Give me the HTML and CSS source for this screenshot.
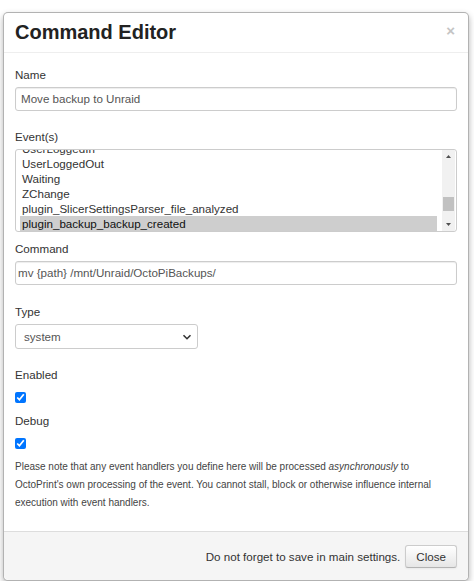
FILE: index.html
```html
<!DOCTYPE html>
<html lang="en">
<head>
    <meta charset="UTF-8">
    <meta content="width=device-width, initial-scale=1.0" name="viewport">
    <title>Command Editor</title>
    <link rel="stylesheet" href="styles.css">
</head>
<body>
    <div class="modal">
        <div class="modal-header">
            <h3>Command Editor</h3>
            <span class="close">&times;</span>
        </div>
        <div class="modal-body">
            <div class="label">Name</div>
            <div class="field field-name">Move backup to Unraid</div>

            <div class="label">Event(s)</div>
            <div class="listbox">
                <div class="options">
                    <div class="option">UserLoggedIn</div>
                    <div class="option">UserLoggedOut</div>
                    <div class="option">Waiting</div>
                    <div class="option">ZChange</div>
                    <div class="option">plugin_SlicerSettingsParser_file_analyzed</div>
                    <div class="option selected">plugin_backup_backup_created</div>
                </div>
                <div class="scrollbar">
                    <svg class="arrow" width="13" height="13" viewBox="0 0 13 13"><path d="M4 8 L9 8 L6.5 5 Z" fill="#505050"/></svg>
                    <div class="track-top"></div>
                    <div class="thumb"></div>
                    <div class="track-bottom"></div>
                    <svg class="arrow" width="13" height="13" viewBox="0 0 13 13"><path d="M4 5 L9 5 L6.5 8 Z" fill="#505050"/></svg>
                </div>
            </div>

            <div class="label">Command</div>
            <div class="field field-command">mv {path} /mnt/Unraid/OctoPiBackups/</div>

            <div class="label">Type</div>
            <div class="select">
                <span>system</span>
                <svg width="10" height="10" viewBox="0 0 10 10"><path d="M1.5 3.2 L5 6.7 L8.5 3.2" fill="none" stroke="#333" stroke-width="1.6"/></svg>
            </div>

            <div class="label label-check">Enabled</div>
            <input class="check" type="checkbox" checked>

            <div class="label label-check">Debug</div>
            <input class="check" type="checkbox" checked>

            <p class="note">Please note that any event handlers you define here will be processed <em>asynchronously</em> to OctoPrint's own processing of the event. You cannot stall, block or otherwise influence internal execution with event handlers.</p>
        </div>
        <div class="modal-footer">
            <span>Do not forget to save in main settings.</span>
            <button class="button">Close</button>
        </div>
    </div>
</body>
</html>
```

FILE: styles.css
```css
body {
    font-family: "Liberation Sans", Arial, Helvetica, sans-serif;
    background-color: #fff;
    margin: 0;
    padding: 12px 0 0 3px;
    color: #333;
}
.modal {
    width: 466px;
    box-sizing: border-box;
    background-color: #fff;
    border: 1px solid rgba(0, 0, 0, 0.3);
    border-radius: 5px;
    box-shadow: 0 3px 6px rgba(0, 0, 0, 0.3);
}
.modal-header {
    height: 39px;
    display: flex;
    align-items: center;
    justify-content: space-between;
    padding: 0 11px;
    border-bottom: 1px solid #eee;
}
.modal-header h3 {
    margin: 0;
    font-size: 20px;
    font-weight: bold;
    color: #222;
}
.close {
    font-size: 15px;
    font-weight: bold;
    color: #c4c4c4;
    margin-top: -4px;
    margin-right: 2px;
}
.modal-body {
    padding: 13px 11px 19px;
}
.label {
    font-size: 11.6px;
    line-height: 17px;
    margin-bottom: 4px;
}
.field {
    height: 24px;
    box-sizing: border-box;
    border: 1px solid #ccc;
    border-radius: 3px;
    box-shadow: inset 0 1px 1px rgba(0, 0, 0, 0.075);
    padding: 0 5px;
    font-size: 11.6px;
    line-height: 22px;
    color: #555;
    margin-bottom: 17px;
}
.field-command {
    padding-left: 2px;
    margin-bottom: 18px;
}
.listbox {
    display: flex;
    height: 83px;
    box-sizing: border-box;
    border: 1px solid #ccc;
    border-radius: 3px;
    overflow: hidden;
    margin-bottom: 8px;
}
.options {
    flex: 1;
    padding: 0 5px 0 4px;
    margin-top: -9px;
}
.option {
    font-size: 11.6px;
    line-height: 15px;
    height: 15px;
    padding-left: 2px;
    color: #333;
    white-space: nowrap;
}
.option.selected {
    background-color: #cecece;
    color: #111;
}
.scrollbar {
    width: 13px;
    display: flex;
    flex-direction: column;
    background-color: #f1f1f1;
    margin-right: 1px;
}
.arrow {
    display: block;
}
.track-top {
    height: 34px;
}
.thumb {
    height: 14px;
    margin: 0 1px;
    background-color: #c1c1c1;
}
.track-bottom {
    flex: 1;
}
.select {
    width: 183px;
    height: 25px;
    box-sizing: border-box;
    border: 1px solid #ccc;
    border-radius: 3px;
    display: flex;
    align-items: center;
    justify-content: space-between;
    padding: 0 5px 0 8px;
    font-size: 11.6px;
    color: #555;
    margin-bottom: 17px;
}
.select svg {
    display: block;
}
.label-check {
    margin-bottom: 9px;
}
.check {
    display: block;
    width: 11px;
    height: 11px;
    margin: 0 0 9px 0;
    accent-color: #0075ff;
}
.note {
    margin: 0;
    font-size: 10px;
    line-height: 18px;
    color: #444;
}
.modal-footer {
    display: flex;
    align-items: center;
    justify-content: flex-end;
    gap: 5px;
    padding: 13px 11px 12px;
    background-color: #f5f5f5;
    border-top: 1px solid #ddd;
    border-radius: 0 0 5px 5px;
    font-size: 11.6px;
}
.button {
    height: 23px;
    padding: 0 10px;
    font-family: inherit;
    font-size: 11.6px;
    color: #333;
    background-color: #f5f5f5;
    background-image: linear-gradient(to bottom, #fff, #e6e6e6);
    border: 1px solid #ccc;
    border-bottom-color: #b3b3b3;
    border-radius: 3px;
    box-shadow: inset 0 1px 0 rgba(255, 255, 255, 0.2), 0 1px 2px rgba(0, 0, 0, 0.05);
}
```
